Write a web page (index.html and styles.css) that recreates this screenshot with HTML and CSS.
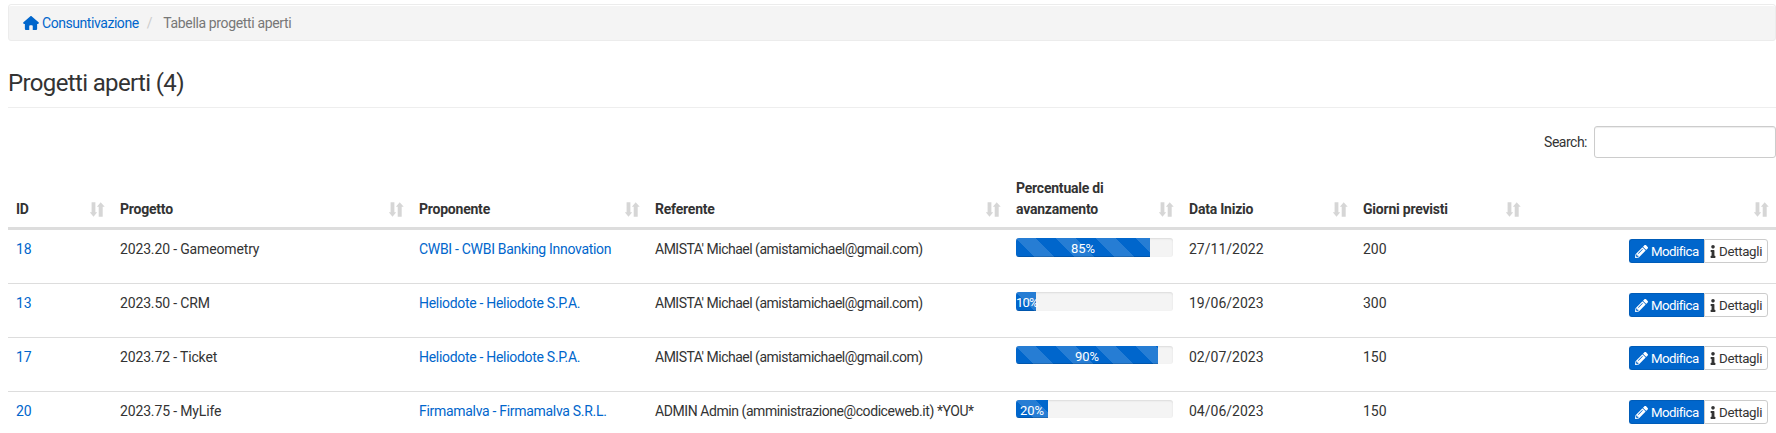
FILE: index.html
```html
<!DOCTYPE html>
<html lang="it">
<head>
<meta charset="utf-8">
<title>Progetti aperti</title>
<link rel="stylesheet" href="styles.css">
</head>
<body>
<svg class="defs" width="0" height="0">
  <symbol id="sort" viewBox="0 0 15 15"><path d="M1.600 .3h3.800v10h1.800L3.500 14.700-.2 10.300h1.800zM8.700 14.700V4.700H6.900L10.700.3l4 4.400h-2v10z"/></symbol>
  <symbol id="home" viewBox="0 0 576 512"><path d="M575.800 255.500c0 18-15 32.100-32 32.100h-32l.7 160.200c0 36-24 64.200-48 64.200H352V352c0-18-14-32-32-32h-64c-18 0-32 14-32 32v160H112c-28 0-48-22-48-48V287.600H32c-18 0-32-14-32-32.100 0-9 3-17 10-24L266.400 8c7-7 15-8 22-8s15 2 21 7l255.400 224.500c8 7 12 15 11 24z"/></symbol>
  <symbol id="pencil" viewBox="0 0 512 512"><path fill-rule="evenodd" d="M498 142l-46 46c-5 5-13 5-17 0L324 77c-5-5-5-12 0-17l46-46c19-19 49-19 68 0l60 60c19 19 19 49 0 68zM284 100L22 362 0 484c-3 16 12 30 28 28l122-22 262-262c5-5 5-13 0-17L301 100c-4-5-12-5-17 0zM124 340c-5-6-5-14 0-20l154-154c6-5 14-5 20 0s5 14 0 20L144 340c-6 5-14 5-20 0zM88 424h48v36l-64 12-32-32 12-64h36z"/></symbol>
  <symbol id="info" viewBox="0 0 192 512"><path d="M20 424h20V280H20c-11 0-20-9-20-20v-48c0-11 9-20 20-20h112c11 0 20 9 20 20v212h20c11 0 20 9 20 20v48c0 11-9 20-20 20H20c-11 0-20-9-20-20v-48c0-11 9-20 20-20zM96 0a72 72 0 1 0 0 144A72 72 0 0 0 96 0z"/></symbol>
</svg>
<ul class="breadcrumb">
  <li><a href="#"><svg class="i-home" viewBox="0 0 576 512"><path d="M544 288h-32v176c0 28-20 48-46 48H352V368c0-18-14-32-32-32h-64c-18 0-32 14-32 32v144H110c-26 0-46-20-46-48V288H32c-30 0-42-36-20-58L266 8c13-11 31-11 44 0l254 222c22 22 10 58-20 58z"/></svg><span class="crumb">Consuntivazione</span></a></li>
  <li class="divider">/</li>
  <li class="active">Tabella progetti aperti</li>
</ul>
<h1 class="title">Progetti aperti (4)</h1>
<div class="filter"><label for="q">Search:</label><input id="q" type="text"></div>
<table class="grid">
  <colgroup><col class="c1"><col class="c2"><col class="c3"><col class="c4"><col class="c5"><col class="c6"><col class="c7"><col class="c8"></colgroup>
  <thead><tr>
    <th><div class="head"><span>ID</span><svg class="i-sort"><use href="#sort"/></svg></div></th>
    <th><div class="head"><span>Progetto</span><svg class="i-sort"><use href="#sort"/></svg></div></th>
    <th><div class="head"><span>Proponente</span><svg class="i-sort"><use href="#sort"/></svg></div></th>
    <th><div class="head"><span>Referente</span><svg class="i-sort"><use href="#sort"/></svg></div></th>
    <th><div class="head"><span>Percentuale di<br>avanzamento</span><svg class="i-sort"><use href="#sort"/></svg></div></th>
    <th><div class="head"><span>Data Inizio</span><svg class="i-sort"><use href="#sort"/></svg></div></th>
    <th><div class="head"><span>Giorni previsti</span><svg class="i-sort"><use href="#sort"/></svg></div></th>
    <th><div class="head"><span></span><svg class="i-sort"><use href="#sort"/></svg></div></th>
  </tr></thead>
  <tbody>
    <tr>
      <td class="num"><a href="#">18</a></td><td class="proj">2023.20 - Gameometry</td><td class="prop"><a href="#">CWBI - CWBI Banking Innovation</a></td><td class="ref">AMISTA' Michael (amistamichael@gmail.com)</td>
      <td class="level"><div class="progress"><div class="bar" style="width:85.4%">85%</div></div></td><td class="num">27/11/2022</td><td class="num">200</td>
      <td class="actions"><div class="btns"><a class="btn primary" href="#"><svg class="i-pencil"><use href="#pencil"/></svg><span>Modifica</span></a><a class="btn" href="#"><svg class="i-info"><use href="#info"/></svg><span>Dettagli</span></a></div></td>
    </tr>
    <tr>
      <td class="num"><a href="#">13</a></td><td class="proj">2023.50 - CRM</td><td class="prop"><a href="#">Heliodote - Heliodote S.P.A.</a></td><td class="ref">AMISTA' Michael (amistamichael@gmail.com)</td>
      <td class="level"><div class="progress"><div class="bar narrow" style="width:12.8%">10%</div></div></td><td class="num">19/06/2023</td><td class="num">300</td>
      <td class="actions"><div class="btns"><a class="btn primary" href="#"><svg class="i-pencil"><use href="#pencil"/></svg><span>Modifica</span></a><a class="btn" href="#"><svg class="i-info"><use href="#info"/></svg><span>Dettagli</span></a></div></td>
    </tr>
    <tr class="tight">
      <td class="num"><a href="#">17</a></td><td class="proj">2023.72 - Ticket</td><td class="prop"><a href="#">Heliodote - Heliodote S.P.A.</a></td><td class="ref">AMISTA' Michael (amistamichael@gmail.com)</td>
      <td class="level"><div class="progress"><div class="bar" style="width:90.5%">90%</div></div></td><td class="num">02/07/2023</td><td class="num">150</td>
      <td class="actions"><div class="btns"><a class="btn primary" href="#"><svg class="i-pencil"><use href="#pencil"/></svg><span>Modifica</span></a><a class="btn" href="#"><svg class="i-info"><use href="#info"/></svg><span>Dettagli</span></a></div></td>
    </tr>
    <tr class="tight">
      <td class="num"><a href="#">20</a></td><td class="proj">2023.75 - MyLife</td><td class="prop"><a href="#">Firmamalva - Firmamalva S.R.L.</a></td><td class="ref long">ADMIN Admin (amministrazione@codiceweb.it) *YOU*</td>
      <td class="level"><div class="progress"><div class="bar" style="width:20.4%">20%</div></div></td><td class="num">04/06/2023</td><td class="num">150</td>
      <td class="actions"><div class="btns"><a class="btn primary" href="#"><svg class="i-pencil"><use href="#pencil"/></svg><span>Modifica</span></a><a class="btn" href="#"><svg class="i-info"><use href="#info"/></svg><span>Dettagli</span></a></div></td>
    </tr>
  </tbody>
</table>
</body>
</html>
```
FILE: styles.css
```css
* { box-sizing: border-box; }
html { overflow: hidden; }
body {
  margin: 0;
  padding: 4px 0 0 8px;
  width: 1776px;
  background: #fff;
  color: #333;
  font: 14px/21px Roboto, "Open Sans", sans-serif;
  letter-spacing: -0.1px;
  white-space: nowrap;
}
a { color: #06c; text-decoration: none; }
svg { fill: currentColor; flex: none; display: block; }
.defs { position: absolute; }

.breadcrumb {
  display: flex;
  align-items: center;
  height: 37px;
  margin: 0;
  padding: 1px 14px 0;
  list-style: none;
  background: #f4f4f4;
  border: 1px solid #ececec;
  border-radius: 3px;
  box-shadow: inset 0 1px 0 #fff;
}
.breadcrumb a { display: flex; align-items: center; gap: 3px; }
.i-home { width: 16px; height: 14px; }
.crumb { letter-spacing: -0.44px; }
.divider { color: #ccc; margin: 0 11px 0 8px; }
.active { color: #777; letter-spacing: -0.36px; }

.title {
  height: 67px;
  margin: 0;
  padding-top: 26px;
  border-bottom: 1px solid #eee;
  font-size: 24px;
  line-height: 32px;
  font-weight: 400;
  letter-spacing: -0.64px;
}
.filter {
  display: flex;
  justify-content: flex-end;
  align-items: center;
  gap: 7px;
  margin-top: 18px;
}
.filter label { letter-spacing: -0.5px; }
.filter input {
  width: 182px;
  height: 32px;
  border: 1px solid #ccc;
  border-radius: 3px;
  box-shadow: inset 0 1px 1px rgba(0, 0, 0, .075);
}

.grid {
  width: 1768px;
  margin-top: 12px;
  table-layout: fixed;
  border-collapse: separate;
  border-spacing: 0;
}
.c1 { width: 104px; } .c2 { width: 299px; } .c3 { width: 236px; } .c4 { width: 361px; }
.c5 { width: 173px; } .c6 { width: 174px; } .c7 { width: 173px; } .c8 { width: 248px; }
th {
  height: 60px;
  padding: 0 7px 7px 8px;
  border-bottom: 3px solid #ddd;
  vertical-align: bottom;
  text-align: left;
  font-weight: 700;
  letter-spacing: -0.22px;
}
.head { display: flex; justify-content: space-between; align-items: flex-end; }
.i-sort { width: 15px; height: 15px; margin-bottom: 3px; color: #d6d6d6; overflow: visible; }
td {
  height: 54px;
  padding: 9px 8px 7px;
  border-bottom: 1px solid #ddd;
  vertical-align: top;
}
tr:last-child td { border-bottom: 0; }
td.level, td.actions { padding: 8px; }
.num { letter-spacing: 0; }
.proj { letter-spacing: -0.15px; }
.prop { letter-spacing: -0.3px; }
.ref { letter-spacing: -0.5px; }
.ref.long { letter-spacing: -0.43px; }

.progress {
  height: 19px;
  border-radius: 3px;
  overflow: hidden;
  background: #f4f4f4;
  box-shadow: inset 0 1px 2px rgba(0, 0, 0, .1);
}
.bar {
  display: flex;
  align-items: center;
  justify-content: center;
  height: 100%;
  padding-top: 2px;
  color: #fff;
  font-size: 13px;
  background: #06c linear-gradient(45deg, rgba(255,255,255,.15) 25%, transparent 25%, transparent 50%, rgba(255,255,255,.15) 50%, rgba(255,255,255,.15) 75%, transparent 75%) 0 0 / 40px 40px;
  box-shadow: inset 0 -1px 0 rgba(0, 0, 0, .15);
}
.bar.narrow { justify-content: flex-start; letter-spacing: -0.8px; }
.tight .progress { height: 18px; }

.btns { display: flex; justify-content: flex-end; padding-top: 1px; }
.tight .btns { padding-top: 0; }
.btn {
  display: flex;
  align-items: center;
  gap: 3px;
  width: 64px;
  height: 24px;
  padding: 1px 0 0 5px;
  border: 1px solid #ccc;
  border-radius: 0 3px 3px 0;
  color: #333;
  font-size: 13.300px;
  letter-spacing: -0.32px;
}
.btn.primary {
  width: 75px;
  border: 1px solid #005cb8;
  border-right: 0;
  border-radius: 3px 0 0 3px;
  background: #06c;
  color: #fff;
  letter-spacing: -0.55px;
}
.i-pencil { width: 13px; height: 13px; }
.i-info { width: 6px; height: 13px; }
```
